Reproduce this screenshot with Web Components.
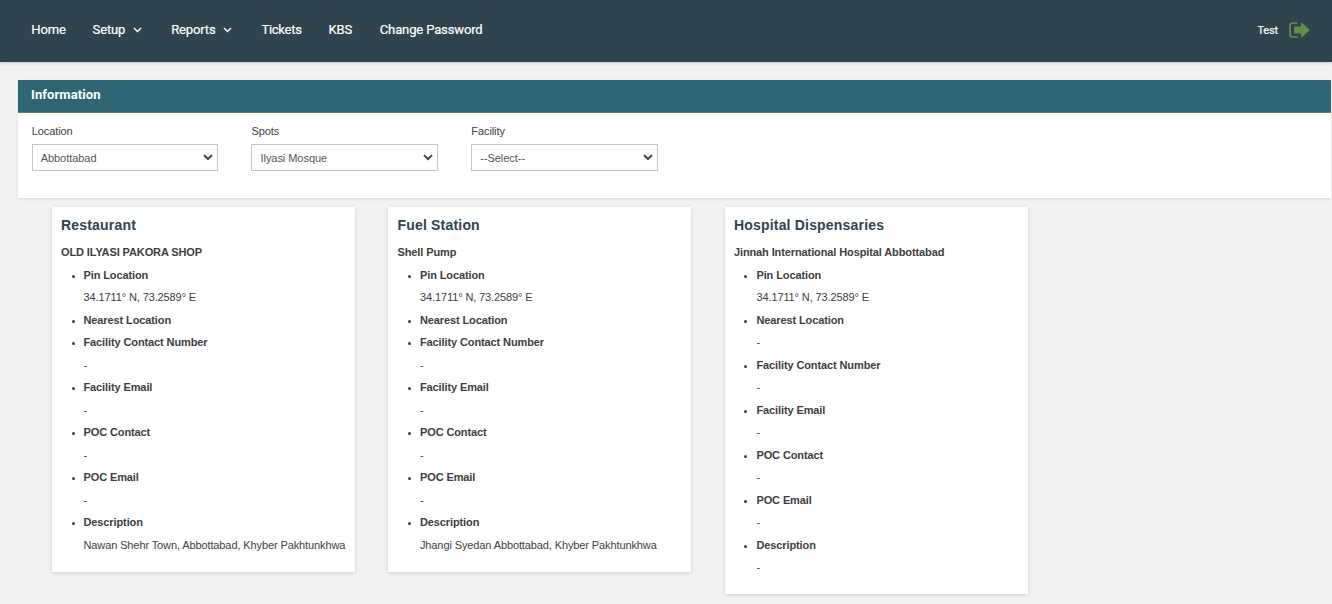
<!DOCTYPE html>
<html lang="en">
<head>
<meta charset="utf-8">
<title>Information</title>
<style>
html,body{margin:0;height:100%;overflow:hidden}
body{background:#f2f2f2;font-family:"Liberation Sans",Arial,sans-serif;color:#3e3e3e}
</style>
</head>
<body>
<info-page></info-page>
<script>
function define(name, html, ready) {
  const tpl = document.createElement('template');
  tpl.innerHTML = html;
  customElements.define(name, class extends HTMLElement {
    constructor() {
      super();
      this.attachShadow({mode: 'open'}).appendChild(tpl.content.cloneNode(true));
    }
    connectedCallback() { if (ready) ready(this, this.shadowRoot); }
  });
}

define('nav-item', `
<style>
:host{display:flex;align-items:center;white-space:nowrap}
svg{display:none;margin-left:7.5px}
:host([menu]) svg{display:block}
</style>
<slot></slot>
<svg width="9" height="6" viewBox="0 0 9 6"><path d="M1 1l3.5 3.4L8 1" fill="none" stroke="#fff" stroke-width="1.4"/></svg>`);

define('top-bar', `
<style>
:host{display:flex;box-sizing:border-box;height:62px;padding:0 22px 3px 31.3px;background:#30444f;color:#fff;
 box-shadow:0 1px 3px rgba(0,0,0,.18);font:400 13px Roboto,sans-serif;align-items:center;justify-content:space-between;-webkit-text-stroke:.2px #fff;letter-spacing:-.13px}
nav{display:flex;gap:26.8px}
nav-item[menu]{margin-right:2.6px}
nav-item.tight{letter-spacing:-.27px}
.user{display:flex;align-items:center;gap:11px;font-size:11px;padding-top:1px}
</style>
<nav><nav-item>Home</nav-item><nav-item menu>Setup</nav-item><nav-item menu>Reports</nav-item><nav-item class="tight">Tickets</nav-item><nav-item>KBS</nav-item><nav-item style="margin-left:1px">Change Password</nav-item></nav>
<div class="user"><span>Test</span>
<svg width="21" height="16" viewBox="0 0 21 16"><path d="M8.5 1H3.8Q1 1 1 3.8v8.4Q1 15 3.8 15h4.7" fill="none" stroke="#638f46" stroke-width="1.7"/><path d="M6 4.4h6V1q0-.8.9-.3l7.4 6.7q.5.6 0 1.2l-7.4 6.7q-.9.5-.9-.3v-3.400H6q-.8 0-.8-.8V5.200q0-.8.8-.8z" fill="#638f46"/></svg></div>`);

define('select-field', `
<style>
:host{display:block;width:186.5px}
label{display:block;font-size:11px;line-height:15px;margin-bottom:5px;letter-spacing:-.08px}
.box{display:flex;align-items:center;justify-content:space-between;box-sizing:border-box;height:27px;border:1px solid #c5c5c5;padding:1px 4px 0 8px;font-size:11px;color:#555;letter-spacing:-.05px}
svg{margin-top:-2px}
</style>
<label></label>
<div class="box"><slot></slot><svg width="10" height="7" viewBox="0 0 10 7"><path d="M1 1.100l4 3.900 4-3.900" fill="none" stroke="#444" stroke-width="2"/></svg></div>`,
(host, root) => { root.querySelector('label').textContent = host.getAttribute('label'); });

define('filter-panel', `
<style>
:host{display:block;box-sizing:border-box;height:118px;margin:18px 1px 0 18px;background:#fff;box-shadow:0 1px 3px rgba(0,0,0,.1)}
h2{box-sizing:border-box;height:33px;margin:0;padding:0 13px;background:#2f6674;border-bottom:1px solid #5b8a3c;color:#fff;font:700 13px/30px Roboto,sans-serif;letter-spacing:.09px}
div{display:flex;gap:33.3px;padding:11px 13.7px}
</style>
<h2>Information</h2><div><slot></slot></div>`);

define('detail-row', `
<style>
:host{display:list-item;list-style:disc;line-height:22.5px;white-space:nowrap}
b{display:block}
::slotted(*){display:block}
:host::marker{font-size:9px}
</style>
<b></b><slot></slot>`,
(host, root) => { root.querySelector('b').textContent = host.getAttribute('label'); });

define('facility-card', `
<style>
:host{display:block;box-sizing:border-box;width:303px;background:#fff;padding:7px 9px 15.7px;box-shadow:0 1px 4px rgba(0,0,0,.14);font-size:11px;letter-spacing:-.11px}
h3{margin:0;font-size:14px;line-height:23px;color:#30444f;letter-spacing:.19px}
h4{margin:4px 0 0;font-size:11px;line-height:22.5px}
div{padding-left:22.5px}
</style>
<h3></h3><h4></h4><div><slot></slot></div>`,
(host, root) => {
  root.querySelector('h3').textContent = host.getAttribute('kind');
  root.querySelector('h4').textContent = host.getAttribute('name');
});

define('info-page', `
<style>
:host{display:block}
main{display:flex;align-items:flex-start;gap:33.47px;padding:9px 52px}
</style>
<top-bar></top-bar>
<filter-panel>
<select-field label="Location">Abbottabad</select-field><select-field label="Spots">Ilyasi Mosque</select-field><select-field label="Facility">--Select--</select-field>
</filter-panel>
<main></main>`,
(host, root) => {
  const labels = ['Pin Location', 'Nearest Location', 'Facility Contact Number', 'Facility Email', 'POC Contact', 'POC Email', 'Description'];
  const pin = '34.1711° N, 73.2589° E';
  const cards = [
    ['Restaurant', 'OLD ILYASI PAKORA SHOP', [pin, '', '-', '-', '-', '-', 'Nawan Shehr Town, Abbottabad, Khyber Pakhtunkhwa']],
    ['Fuel Station', 'Shell Pump', [pin, '', '-', '-', '-', '-', 'Jhangi Syedan Abbottabad, Khyber Pakhtunkhwa']],
    ['Hospital Dispensaries', 'Jinnah International Hospital Abbottabad', [pin, '-', '-', '-', '-', '-', '-']]
  ];
  root.querySelector('main').innerHTML = cards.map(([kind, name, values]) =>
    `<facility-card kind="${kind}" name="${name}">${labels.map((label, i) =>
      `<detail-row label="${label}">${values[i] ? `<span>${values[i]}</span>` : ''}</detail-row>`).join('')}</facility-card>`).join('');
});
</script>
</body>
</html>
